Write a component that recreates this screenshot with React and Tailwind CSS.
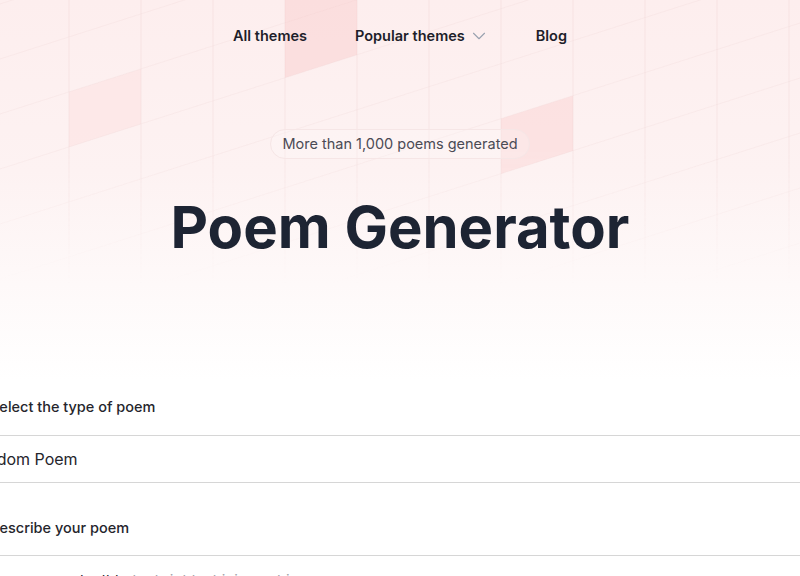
import React from "react";
import { ChevronDown } from "lucide-react";

const SLOPE = 0.32;
const yAt = (c, x) => c - SLOPE * x;

function GridBg() {
  const xs = [];
  for (let k = -1; k <= 11; k++) xs.push(69 + 72 * k);
  const cs = [];
  for (let n = -2; n <= 12; n++) cs.push(4 + 55 * n);
  const cell = (x0, c0, c1) => {
    const x1 = x0 + 72;
    return `${x0},${yAt(c0, x0)} ${x1},${yAt(c0, x1)} ${x1},${yAt(c1, x1)} ${x0},${yAt(c1, x0)}`;
  };
  return (
    <svg width="800" height="380" viewBox="0 0 800 380" className="block">
      <polygon points={cell(285, 59, 169)} fill="#fbd6d6" opacity="0.65" />
      <polygon points={cell(69, 114, 169)} fill="#fcdcdc" opacity="0.4" />
      <polygon points={cell(501, 279, 334)} fill="#fbd6d6" opacity="0.55" />
      {xs.map((x) => (
        <line key={"v" + x} x1={x} y1="0" x2={x} y2="380" stroke="#e8c4c4" strokeOpacity="0.22" strokeWidth="1" />
      ))}
      {cs.map((c) => (
        <line key={"h" + c} x1="0" y1={yAt(c, 0)} x2="800" y2={yAt(c, 800)} stroke="#e8c4c4" strokeOpacity="0.16" strokeWidth="1" />
      ))}
    </svg>
  );
}

export default function App() {
  return (
    <div className="relative w-[800px] h-[576px] overflow-hidden bg-white font-['Inter',sans-serif]">
      <div className="absolute inset-x-0 top-0 h-[380px] bg-[linear-gradient(to_bottom,#fdeeee_0%,#fdf2f2_45%,#fef9f9_75%,#ffffff_100%)]">
        <div className="[mask-image:linear-gradient(to_bottom,black_0%,black_40%,transparent_75%)]">
          <GridBg />
        </div>
      </div>

      <div className="relative">
        <nav className="h-[72px] flex items-center justify-center text-[14.5px] font-semibold text-[#1e1e2a]">
          <a className="px-6">All themes</a>
          <a className="px-6 flex items-center">
            Popular themes
            <ChevronDown size={22} strokeWidth={1.2} className="ml-[3px] -mr-[2px] text-gray-400" />
          </a>
          <a className="px-6">Blog</a>
        </nav>

        <div className="mt-[57px] flex justify-center">
          <div className="h-[30px] px-[11px] flex items-center rounded-full border border-[#f6e6e6] bg-white/20 text-[14.5px] text-[#4b4b55]">
            More than 1,000 poems generated
          </div>
        </div>

        <h1 className="mt-[39px] text-center text-[58px] leading-none font-bold text-[#1d2433]">
          Poem Generator
        </h1>

        <div className="mt-[141px] -ml-[32px] w-[900px] text-[#25252c]">
          <div className="pl-[22px] h-[20px] text-[14.5px] leading-[20px] font-medium">Select the type of poem</div>
          <div className="mt-[18px] h-[48px] border-y border-[#d6d6d6] flex items-center text-[16px]">Random Poem</div>
          <div className="h-[72px] pl-[21px] flex items-center pt-[18px] text-[14.5px] font-medium">Describe your poem</div>
          <div className="border-t border-[#d6d6d6] pt-[13px] pl-[112px] text-[15px] leading-[24px]">
            <span className="text-[#27272e]">he lt te</span>
            <span className="text-[#a3a3ab]"> be bright, shining, a hi...</span>
          </div>
        </div>
      </div>
    </div>
  );
}
